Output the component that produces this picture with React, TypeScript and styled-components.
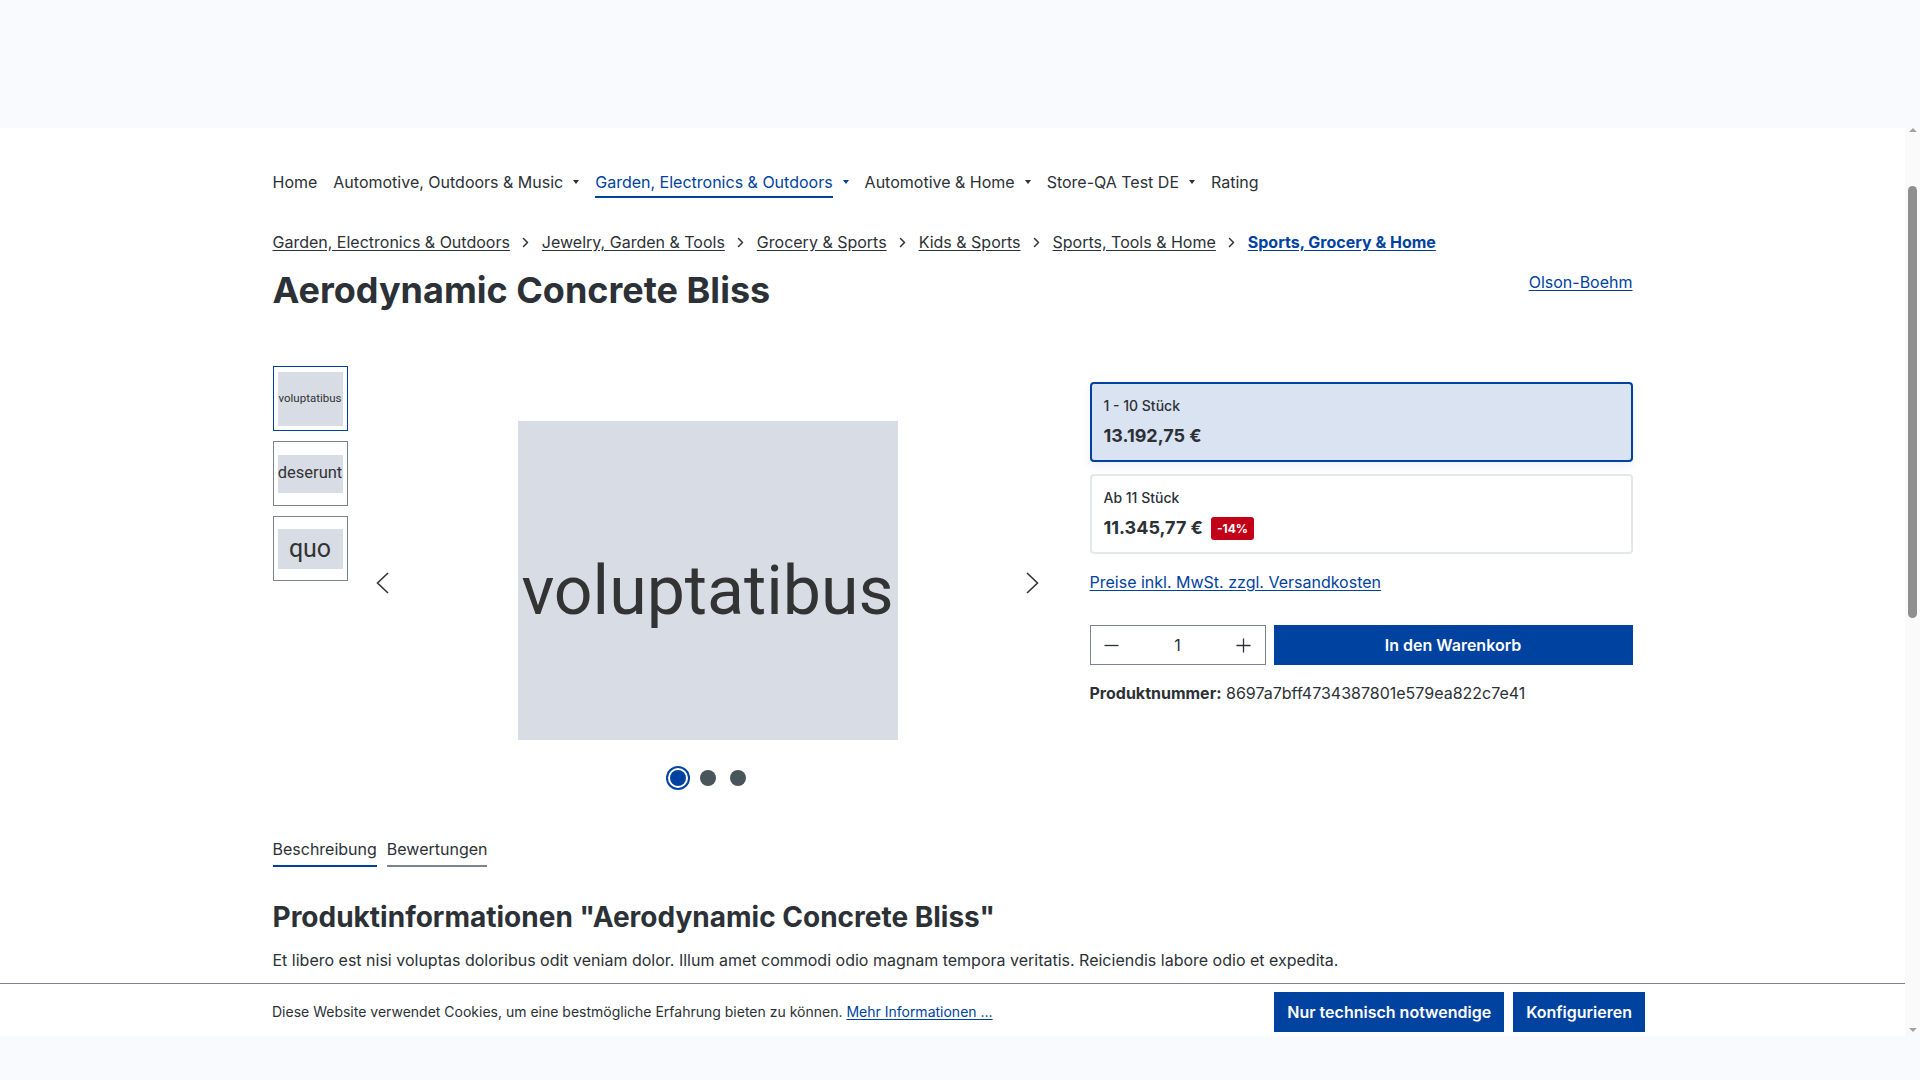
import React from "react";
import styled, { createGlobalStyle } from "styled-components";

const BLUE = "#0042a0";
const TEXT = "#2b3136";
const GRAY = "#798490";
const BAND = "#f9fafd";

const GlobalStyle = createGlobalStyle`
  html, body { margin: 0; padding: 0; }
  body {
    background: ${BAND};
    font-family: Inter, "Noto Sans", "Liberation Sans", sans-serif;
    color: ${TEXT};
  }
  * { box-sizing: border-box; }
`;

const Page = styled.div`
  height: 1080px;
  display: flex;
  flex-direction: column;
  overflow: hidden;
`;

const Band = styled.div<{ $h: number }>`
  flex: none;
  height: ${(p) => p.$h}px;
  background: ${BAND};
`;

const Frame = styled.div`
  flex: none;
  height: 908px;
  display: flex;
  background: #fff;
`;

const Viewport = styled.div`
  flex: 1;
  min-width: 0;
  display: flex;
  flex-direction: column;
  overflow: hidden;
`;

const Scroller = styled.div`
  flex: 1;
  overflow: hidden;
`;

const Container = styled.div`
  width: 1360px;
  margin: 0 auto;
`;

/* ---------- navigation ---------- */
const Nav = styled.nav`
  display: flex;
  align-items: flex-start;
  gap: 16px;
  padding-top: 42px;
`;

const NavItem = styled.a<{ $active?: boolean }>`
  display: flex;
  align-items: flex-start;
  font-size: 16px;
  line-height: 24px;
  color: ${(p) => (p.$active ? BLUE : TEXT)};
  text-decoration: none;
`;

const NavText = styled.span<{ $active?: boolean }>`
  padding-bottom: 2px;
  border-bottom: 2px solid ${(p) => (p.$active ? BLUE : "transparent")};
`;

const Caret = styled.span`
  width: 0;
  height: 0;
  margin: 10px 0 0 10px;
  border-left: 3.5px solid transparent;
  border-right: 3.5px solid transparent;
  border-top: 4px solid currentColor;
`;

/* ---------- breadcrumb ---------- */
const Breadcrumb = styled.nav`
  display: flex;
  align-items: center;
  margin-top: 32px;
  font-size: 16px;
  line-height: 24px;
`;

const Crumb = styled.a<{ $active?: boolean }>`
  color: ${(p) => (p.$active ? BLUE : TEXT)};
  font-weight: ${(p) => (p.$active ? 700 : 400)};
  text-decoration: underline;
  text-underline-offset: 2px;
`;

const Sep = styled.span`
  width: 32px;
  display: flex;
  justify-content: center;
  align-items: center;
`;

/* ---------- title ---------- */
const TitleRow = styled.div`
  display: flex;
  justify-content: space-between;
  align-items: flex-start;
  margin-top: 15px;
`;

const Title = styled.h1`
  margin: 0;
  font-size: 36px;
  line-height: 1.2;
  font-weight: 700;
`;

const Maker = styled.a`
  margin-top: 1px;
  font-size: 16px;
  line-height: 24px;
  color: ${BLUE};
  text-decoration: underline;
  text-underline-offset: 2px;
`;

/* ---------- product row ---------- */
const ProductRow = styled.div`
  display: flex;
  margin-top: 54px;
`;

const GalleryCol = styled.div`
  width: 777px;
  display: flex;
  gap: 18px;
`;

const Thumbs = styled.div`
  width: 75px;
  display: flex;
  flex-direction: column;
  gap: 10px;
`;

const Thumb = styled.div<{ $active?: boolean }>`
  width: 75px;
  height: 65px;
  padding: 4px;
  border: 1px solid ${(p) => (p.$active ? BLUE : GRAY)};
  display: flex;
  align-items: center;
  justify-content: center;
`;

const Placeholder = styled.div<{ $w: number; $h: number; $size: number; $shift?: number }>`
  width: ${(p) => p.$w}px;
  height: ${(p) => p.$h}px;
  background: #d8dce5;
  color: #333;
  font-family: Roboto, "Liberation Sans", sans-serif;
  font-size: ${(p) => p.$size}px;
  line-height: 1;
  display: flex;
  align-items: center;
  justify-content: center;
  padding-top: ${(p) => p.$shift ?? 0}px;
  white-space: nowrap;
  overflow: hidden;
`;

const Slider = styled.div`
  flex: 1;
  padding-top: 55px;
`;

const SlideRow = styled.div`
  height: 319px;
  display: flex;
  align-items: center;
  justify-content: space-between;
`;

const Arrow = styled.button`
  width: 24px;
  margin: 5px 5px 0;
  padding: 0;
  border: none;
  background: none;
  display: flex;
  justify-content: center;
  color: #333;
`;

const Dots = styled.div`
  margin-top: 30px;
  display: flex;
  justify-content: center;
  gap: 14px;
`;

const Dot = styled.span<{ $active?: boolean }>`
  width: 16px;
  height: 16px;
  border-radius: 50%;
  background: ${(p) => (p.$active ? BLUE : "#4a545b")};
  box-shadow: ${(p) => (p.$active ? `0 0 0 2px #fff, 0 0 0 4px ${BLUE}` : "none")};
`;

/* ---------- buy box ---------- */
const BuyCol = styled.div`
  width: 543px;
  margin-left: 40px;
  padding-top: 16px;
`;

const PriceBox = styled.div<{ $active?: boolean }>`
  height: 80px;
  padding: 12px 12px 10px;
  border: 2px solid ${(p) => (p.$active ? BLUE : "#e4e7ec")};
  border-radius: 4px;
  background: ${(p) => (p.$active ? "#dae3f1" : "#fff")};
  box-shadow: ${(p) => (p.$active ? "0 4px 10px rgba(0, 66, 160, 0.08)" : "none")};
  & + & {
    margin-top: 12px;
  }
`;

const PriceLabel = styled.div`
  font-size: 14px;
  line-height: 20px;
  font-weight: 500;
`;

const PriceLine = styled.div`
  margin-top: 6px;
  display: flex;
  align-items: center;
  gap: 8px;
  height: 28px;
`;

const Price = styled.span`
  font-size: 18px;
  line-height: 28px;
  font-weight: 700;
`;

const Badge = styled.span`
  height: 23px;
  padding: 0 6px;
  border-radius: 3px;
  background: #c20017;
  color: #fff;
  font-size: 12px;
  font-weight: 700;
  line-height: 23px;
`;

const TaxLink = styled.a`
  display: block;
  margin-top: 16px;
  font-size: 16px;
  line-height: 24px;
  color: ${BLUE};
  text-decoration: underline;
  text-underline-offset: 2px;
`;

const BuyRow = styled.div`
  margin-top: 31px;
  display: flex;
  gap: 8px;
`;

const Qty = styled.div`
  width: 176px;
  height: 40px;
  border: 1px solid ${GRAY};
  display: flex;
  align-items: center;
`;

const QtyBtn = styled.button`
  width: 42px;
  height: 38px;
  padding: 0;
  border: none;
  background: none;
  display: flex;
  align-items: center;
  justify-content: center;
  color: ${TEXT};
`;

const QtyValue = styled.span`
  flex: 1;
  text-align: center;
  font-size: 16px;
`;

const CartButton = styled.button`
  flex: 1;
  height: 40px;
  border: none;
  background: ${BLUE};
  color: #fff;
  font-family: inherit;
  font-size: 16px;
  font-weight: 600;
`;

const ProductNumber = styled.div`
  margin-top: 16px;
  font-size: 16px;
  line-height: 24px;
  & b {
    font-weight: 650;
  }
`;

/* ---------- tabs / description ---------- */
const Tabs = styled.div`
  margin-top: 51px;
  display: flex;
  gap: 10px;
`;

const Tab = styled.a<{ $active?: boolean }>`
  font-size: 16px;
  line-height: 24px;
  padding-bottom: 4px;
  border-bottom: 2px solid ${(p) => (p.$active ? BLUE : GRAY)};
  color: ${TEXT};
`;

const InfoTitle = styled.h2`
  margin: 34px 0 0;
  font-size: 28px;
  line-height: 1.2;
  font-weight: 700;
`;

const InfoText = styled.p`
  margin: 13px 0 0;
  font-size: 16px;
  line-height: 24px;
`;

/* ---------- cookie bar ---------- */
const CookieBar = styled.div`
  flex: none;
  height: 53px;
  border-top: 1px solid ${GRAY};
  padding: 8px 260px 0 272px;
  overflow: hidden;
`;

const CookieRow = styled.div`
  height: 40px;
  display: flex;
  align-items: center;
  justify-content: space-between;
`;

const CookieText = styled.p`
  margin: 0;
  font-size: 14px;
  line-height: 20px;
  & a {
    color: ${BLUE};
    text-decoration: underline;
    text-underline-offset: 2px;
  }
`;

const CookieButtons = styled.div`
  display: flex;
  gap: 9px;
`;

const CookieButton = styled.button`
  height: 40px;
  padding: 0 13px;
  border: none;
  background: ${BLUE};
  color: #fff;
  font-family: inherit;
  font-size: 16px;
  font-weight: 600;
`;

/* ---------- scrollbar ---------- */
const ScrollTrack = styled.div`
  flex: none;
  width: 15px;
  background: #fafafa;
  display: flex;
  flex-direction: column;
  align-items: center;
`;

const ScrollArrow = styled.span<{ $down?: boolean }>`
  width: 0;
  height: 0;
  border-left: 4.5px solid transparent;
  border-right: 4.5px solid transparent;
  ${(p) =>
    p.$down
      ? `border-top: 4px solid #a3a3a3; margin: auto 0 4px;`
      : `border-bottom: 4px solid #a3a3a3; margin-top: 0;`}
`;

const ScrollThumb = styled.span`
  width: 9px;
  height: 432px;
  margin-top: 54px;
  border-radius: 5px;
  background: #8f8f8f;
`;

const Chevron = () => (
  <svg width="7" height="11" viewBox="0 0 7 11" fill="none">
    <path d="M1.5 1.5L5.5 5.5L1.5 9.5" stroke={TEXT} strokeWidth="1.5" strokeLinecap="round" strokeLinejoin="round" />
  </svg>
);

const SlideArrow = ({ dir }: { dir: "left" | "right" }) => (
  <svg width="13" height="22" viewBox="0 0 13 22" fill="none">
    <path
      d={dir === "left" ? "M12 1L1.5 11L12 21" : "M1 1L11.5 11L1 21"}
      stroke="currentColor"
      strokeWidth="1.6"
    />
  </svg>
);

const Minus = () => (
  <svg width="15" height="15" viewBox="0 0 15 15" fill="none">
    <path d="M0.5 7.5H14.5" stroke={TEXT} strokeWidth="1.3" />
  </svg>
);

const Plus = () => (
  <svg width="15" height="15" viewBox="0 0 15 15" fill="none">
    <path d="M0.5 7.5H14.5M7.5 0.5V14.5" stroke={TEXT} strokeWidth="1.3" />
  </svg>
);

const navItems = [
  { label: "Home" },
  { label: "Automotive, Outdoors & Music", caret: true },
  { label: "Garden, Electronics & Outdoors", caret: true, active: true },
  { label: "Automotive & Home", caret: true },
  { label: "Store-QA Test DE", caret: true },
  { label: "Rating" },
];

const crumbs = [
  "Garden, Electronics & Outdoors",
  "Jewelry, Garden & Tools",
  "Grocery & Sports",
  "Kids & Sports",
  "Sports, Tools & Home",
  "Sports, Grocery & Home",
];

export default function App() {
  return (
    <>
      <GlobalStyle />
      <Page>
        <Band $h={128} />
        <Frame>
          <Viewport>
            <Scroller>
              <Container>
                <Nav>
                  {navItems.map((n) => (
                    <NavItem key={n.label} $active={n.active}>
                      <NavText $active={n.active}>{n.label}</NavText>
                      {n.caret && <Caret />}
                    </NavItem>
                  ))}
                </Nav>

                <Breadcrumb>
                  {crumbs.map((c, i) => (
                    <React.Fragment key={c}>
                      {i > 0 && (
                        <Sep>
                          <Chevron />
                        </Sep>
                      )}
                      <Crumb $active={i === crumbs.length - 1}>{c}</Crumb>
                    </React.Fragment>
                  ))}
                </Breadcrumb>

                <TitleRow>
                  <Title>Aerodynamic Concrete Bliss</Title>
                  <Maker>Olson-Boehm</Maker>
                </TitleRow>

                <ProductRow>
                  <GalleryCol>
                    <Thumbs>
                      <Thumb $active>
                        <Placeholder $w={65} $h={54} $size={11.5}>voluptatibus</Placeholder>
                      </Thumb>
                      <Thumb>
                        <Placeholder $w={65} $h={38} $size={16.5}>deserunt</Placeholder>
                      </Thumb>
                      <Thumb>
                        <Placeholder $w={65} $h={40} $size={25}>quo</Placeholder>
                      </Thumb>
                    </Thumbs>
                    <Slider>
                      <SlideRow>
                        <Arrow aria-label="previous">
                          <SlideArrow dir="left" />
                        </Arrow>
                        <Placeholder $w={380} $h={319} $size={68} $shift={20}>
                          voluptatibus
                        </Placeholder>
                        <Arrow aria-label="next">
                          <SlideArrow dir="right" />
                        </Arrow>
                      </SlideRow>
                      <Dots>
                        <Dot $active />
                        <Dot />
                        <Dot />
                      </Dots>
                    </Slider>
                  </GalleryCol>

                  <BuyCol>
                    <PriceBox $active>
                      <PriceLabel>1 - 10 Stück</PriceLabel>
                      <PriceLine>
                        <Price>13.192,75 €</Price>
                      </PriceLine>
                    </PriceBox>
                    <PriceBox>
                      <PriceLabel>Ab 11 Stück</PriceLabel>
                      <PriceLine>
                        <Price>11.345,77 €</Price>
                        <Badge>-14%</Badge>
                      </PriceLine>
                    </PriceBox>
                    <TaxLink>Preise inkl. MwSt. zzgl. Versandkosten</TaxLink>
                    <BuyRow>
                      <Qty>
                        <QtyBtn aria-label="minus">
                          <Minus />
                        </QtyBtn>
                        <QtyValue>1</QtyValue>
                        <QtyBtn aria-label="plus">
                          <Plus />
                        </QtyBtn>
                      </Qty>
                      <CartButton>In den Warenkorb</CartButton>
                    </BuyRow>
                    <ProductNumber>
                      <b>Produktnummer:</b> 8697a7bff4734387801e579ea822c7e41
                    </ProductNumber>
                  </BuyCol>
                </ProductRow>

                <Tabs>
                  <Tab $active>Beschreibung</Tab>
                  <Tab>Bewertungen</Tab>
                </Tabs>
                <InfoTitle>Produktinformationen "Aerodynamic Concrete Bliss"</InfoTitle>
                <InfoText>
                  Et libero est nisi voluptas doloribus odit veniam dolor. Illum amet commodi odio magnam
                  tempora veritatis. Reiciendis labore odio et expedita.
                </InfoText>
              </Container>
            </Scroller>
            <CookieBar>
              <CookieRow>
                <CookieText>
                  Diese Website verwendet Cookies, um eine bestmögliche Erfahrung bieten zu können.{" "}
                  <a>Mehr Informationen ...</a>
                </CookieText>
                <CookieButtons>
                  <CookieButton>Nur technisch notwendige</CookieButton>
                  <CookieButton>Konfigurieren</CookieButton>
                </CookieButtons>
              </CookieRow>
            </CookieBar>
          </Viewport>
          <ScrollTrack>
            <ScrollArrow />
            <ScrollThumb />
            <ScrollArrow $down />
          </ScrollTrack>
        </Frame>
        <Band $h={44} />
      </Page>
    </>
  );
}
